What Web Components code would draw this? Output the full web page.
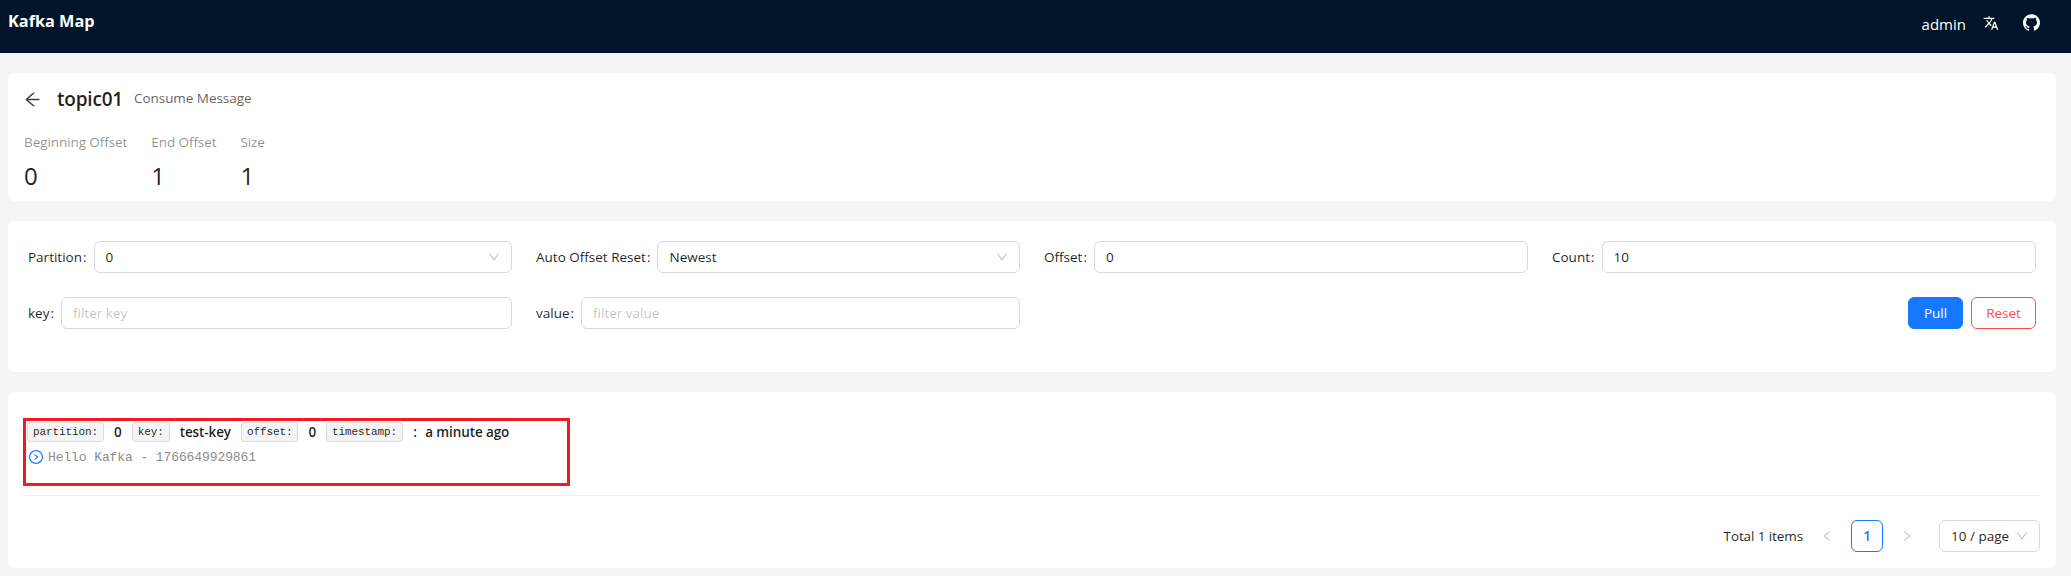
<!DOCTYPE html>
<html>

<head>
    <meta charset="utf-8">
    <title>Kafka Map</title>
    <style>
        html,
        body {
            margin: 0;
            background-color: #f5f5f5;
            font-family: "Open Sans", "Noto Sans", sans-serif;
            font-size: 13.5px;
            color: rgba(0, 0, 0, .88);
        }

        main {
            display: flex;
            flex-direction: column;
            gap: 20px;
            width: 2048px;
            padding: 20px 0 0 8px;
        }
    </style>
</head>

<body>
    <app-header></app-header>
    <main>
        <app-card style="height: 128px">
            <page-title name="topic01" sub="Consume Message"></page-title>
            <div style="display: flex; gap: 24px">
                <stat-item label="Beginning Offset" value="0"></stat-item>
                <stat-item label="End Offset" value="1"></stat-item>
                <stat-item label="Size" value="1"></stat-item>
            </div>
        </app-card>
        <app-card style="height: 151px" pad="20px 20px 0">
            <search-form></search-form>
        </app-card>
        <app-card style="height: 176px" pad="26px 16px 0">
            <message-row></message-row>
            <page-bar></page-bar>
        </app-card>
    </main>

    <script>
        const icons = {
            back: ['64 64 896 896', 'M872 474H286.9l350.2-304c5.6-4.9 2.2-14-5.2-14h-88.5c-3.9 0-7.6 1.4-10.5 3.9L155 487.8a31.96 31.96 0 0 0 0 48.3L535.1 866c1.5 1.3 3.3 2 5.2 2h91.5c7.4 0 10.8-9.2 5.2-14L286.9 550H872c4.4 0 8-3.6 8-8v-60c0-4.4-3.6-8-8-8z'],
            down: ['64 64 896 896', 'M884 256h-75c-5.1 0-9.9 2.5-12.9 6.6L512 654.2 227.9 262.6c-3-4.1-7.8-6.6-12.9-6.6h-75c-6.5 0-10.3 7.4-6.5 12.7l352.6 486.1c12.8 17.6 39 17.6 51.7 0l352.6-486.1c3.9-5.3.1-12.7-6.4-12.7z'],
            left: ['64 64 896 896', 'M724 218.3V141c0-6.7-7.7-10.4-12.9-6.3L260.3 486.8a31.86 31.86 0 0 0 0 50.3l450.8 352.1c5.3 4.1 12.9.4 12.9-6.3v-77.3c0-4.9-2.3-9.6-6.1-12.6l-360-281 360-281.1c3.8-3 6.1-7.7 6.1-12.6z'],
            right: ['64 64 896 896', 'M765.7 486.8L314.9 134.7A7.97 7.97 0 0 0 302 141v77.3c0 4.9 2.3 9.6 6.1 12.6l360 281.1-360 281.1c-3.9 3-6.1 7.7-6.1 12.6V883c0 6.7 7.7 10.4 12.9 6.3l450.8-352.1a31.96 31.96 0 0 0 0-50.4z'],
            github: ['64 64 896 896', 'M511.6 76.3C264.3 76.2 64 276.4 64 523.5 64 718.9 189.3 885 363.8 946c23.5 5.9 19.9-10.8 19.9-22.2v-77.5c-135.7 15.9-141.2-73.9-150.3-88.9C215 726 171.5 718 184.5 703c30.9-15.9 62.4 4 98.9 57.9 26.4 39.1 77.9 32.5 104 26 5.7-23.5 17.9-44.5 34.7-60.8-140.6-25.2-199.2-111-199.2-213 0-49.5 16.3-95 48.3-131.7-20.4-60.5 1.9-112.3 4.9-120 58.1-5.2 118.5 41.6 123.2 45.3 33-8.9 70.7-13.6 112.9-13.6 42.4 0 80.2 4.9 113.5 13.9 11.3-8.6 67.3-48.8 121.3-43.9 2.9 7.7 24.7 58.3 5.5 118 32.4 36.8 48.9 82.7 48.9 132.3 0 102.2-59 188.1-200 212.9a127.5 127.5 0 0 1 38.1 91v112.5c.8 9 0 17.9 15 17.9 177.1-59.7 304.6-227 304.6-424.1 0-247.2-200.4-447.3-447.5-447.3z'],
            translate: ['0 0 24 24', 'M12.87 15.07l-2.54-2.51.03-.03c1.74-1.94 2.98-4.17 3.71-6.53H17V4h-7V2H8v2H1v1.99h11.17C11.5 7.92 10.44 9.75 9 11.35 8.07 10.32 7.3 9.19 6.69 8h-2c.73 1.63 1.73 3.17 2.98 4.56l-5.09 5.02L4 19l5-5 3.11 3.11.76-2.04zM18.5 10h-2L12 22h2l1.12-3h4.75L21 22h2l-4.5-12zm-2.62 7l1.62-4.33L19.12 17h-3.24z'],
            play: ['64 64 896 896', 'M666.7 505.5l-246-178A8 8 0 0 0 408 334v46.9c0 10.2 4.9 19.9 13.2 25.9L566.6 512 421.2 617.2c-8.3 6-13.2 15.6-13.2 25.9V690c0 6.5 7.4 10.3 12.7 6.5l246-178c4.4-3.2 4.4-9.8 0-13z M512 64C264.6 64 64 264.6 64 512s200.6 448 448 448 448-200.6 448-448S759.4 64 512 64zm0 820c-205.4 0-372-166.6-372-372s166.6-372 372-372 372 166.6 372 372-166.6 372-372 372z']
        };

        function icon(name, size) {
            const [box, d] = icons[name];
            return `<svg width="${size}" height="${size}" viewBox="${box}" fill="currentColor" style="display:block;flex:none"><path d="${d}"/></svg>`;
        }

        class Base extends HTMLElement {
            constructor() {
                super();
                this.attachShadow({ mode: 'open' });
            }
            attr(name, fallback = '') {
                return this.getAttribute(name) ?? fallback;
            }
        }

        class AppHeader extends Base {
            connectedCallback() {
                this.shadowRoot.innerHTML = `
                <style>
                    :host { display: flex; align-items: center; height: 53px; padding: 0 31px 0 8px; background: #001529; color: #fff; }
                    .logo { font-size: 16.3px; font-weight: 700; flex: 1; margin-top: -11px; }
                    .user { font-size: 15px; margin-top: -6px; margin-right: 17px; }
                    .lang { margin-right: 24px; margin-top: -7px; }
                    .git { margin-top: -8px; }
                </style>
                <div class="logo">Kafka Map</div>
                <div class="user">admin</div>
                <div class="lang">${icon('translate', 16)}</div>
                <div class="git">${icon('github', 17)}</div>`;
            }
        }

        class AppCard extends Base {
            connectedCallback() {
                this.shadowRoot.innerHTML = `
                <style>
                    :host { display: block; box-sizing: border-box; background: #fff; border-radius: 6px; padding: ${this.attr('pad', '16px')}; }
                </style>
                <slot></slot>`;
            }
        }

        class PageTitle extends Base {
            connectedCallback() {
                this.shadowRoot.innerHTML = `
                <style>
                    :host { display: flex; align-items: center; height: 22px; margin: 0 0 20px; }
                    .back { margin: -2px 16px 0 0; color: rgba(0,0,0,.75); }
                    .name { font-size: 19px; font-weight: 600; letter-spacing: -.2px; color: rgba(0,0,0,.88); margin: -2px 11px 0 0; }
                    .sub { color: rgba(0,0,0,.65); margin-top: -4px; letter-spacing: -.05px; }
                </style>
                <span class="back">${icon('back', 17)}</span>
                <span class="name">${this.attr('name')}</span>
                <span class="sub">${this.attr('sub')}</span>`;
            }
        }

        class StatItem extends Base {
            connectedCallback() {
                this.shadowRoot.innerHTML = `
                <style>
                    :host { display: block; }
                    .label { color: rgba(0,0,0,.45); line-height: 22px; margin-bottom: 7px; letter-spacing: -.08px; }
                    .value { font-size: 24px; line-height: 32px; color: rgba(0,0,0,.88); }
                </style>
                <div class="label">${this.attr('label')}</div>
                <div class="value">${this.attr('value')}</div>`;
            }
        }

        class FormField extends Base {
            connectedCallback() {
                const value = this.attr('value');
                const hint = this.attr('hint');
                this.shadowRoot.innerHTML = `
                <style>
                    :host { display: flex; align-items: center; height: 32px; }
                    label { white-space: nowrap; margin-right: 7px; }
                    label i { font-style: normal; margin-left: 1px; }
                    .box { flex: 1; box-sizing: border-box; height: 32px; display: flex; align-items: center; justify-content: space-between; padding: 0 11px; border: 1px solid #d9d9d9; border-radius: 6px; background: #fff; }
                    .hint { color: rgba(0,0,0,.25); }
                    svg { color: rgba(0,0,0,.25); }
                </style>
                <label>${this.attr('label')}<i>:</i></label>
                <div class="box">
                    ${hint ? `<span class="hint">${hint}</span>` : `<span>${value}</span>`}
                    ${this.hasAttribute('select') ? icon('down', 12) : ''}
                </div>`;
            }
        }

        class AppButton extends Base {
            connectedCallback() {
                const danger = this.hasAttribute('danger');
                this.shadowRoot.innerHTML = `
                <style>
                    :host { display: flex; align-items: center; justify-content: center; box-sizing: border-box; height: 32px; width: ${danger ? '65px' : '55px'}; border-radius: 6px; border: 1px solid ${danger ? '#ff4d4f' : '#1677ff'}; color: ${danger ? '#ff4d4f' : '#fff'}; background: ${danger ? '#fff' : '#1677ff'}; }
                </style>
                <slot></slot>`;
            }
        }

        class SearchForm extends Base {
            connectedCallback() {
                this.shadowRoot.innerHTML = `
                <style>
                    :host { display: grid; grid-template-columns: repeat(4, 484px); column-gap: 24px; row-gap: 24px; }
                    .actions { grid-column: 4; display: flex; justify-content: flex-end; gap: 8px; }
                </style>
                <form-field label="Partition" value="0" select></form-field>
                <form-field label="Auto Offset Reset" value="Newest" select></form-field>
                <form-field label="Offset" value="0"></form-field>
                <form-field label="Count" value="10"></form-field>
                <form-field label="key" hint="filter key"></form-field>
                <form-field label="value" hint="filter value"></form-field>
                <div class="actions">
                    <app-button>Pull</app-button>
                    <app-button danger>Reset</app-button>
                </div>`;
            }
        }

        class KeyTag extends Base {
            connectedCallback() {
                this.shadowRoot.innerHTML = `
                <style>
                    :host { display: block; box-sizing: border-box; height: 20px; line-height: 18px; padding: 0 5px; background: #f5f5f5; border: 1px solid #dcdcdc; border-radius: 3px; font-family: "Liberation Mono", monospace; font-size: 11px; font-weight: 400; letter-spacing: -.1px; color: rgba(0,0,0,.88); }
                </style>
                <slot></slot>`;
            }
        }

        class MessageRow extends Base {
            connectedCallback() {
                this.shadowRoot.innerHTML = `
                <style>
                    :host { display: block; box-sizing: border-box; width: 547px; height: 68px; margin-left: -1px; border: 3px solid #ed1c24; padding: 1px 1px; }
                    .meta { display: flex; align-items: center; height: 20px; font-weight: 600; letter-spacing: -.1px; }
                    .meta span { padding: 0 10px; }
                    .meta span.last { padding: 0 0 0 10px; }
                    .meta span.last b { font-weight: 600; margin-right: 5px; }
                    .body { display: flex; align-items: center; gap: 5px; margin: 5px 0 0 2px; height: 20px; font-family: "Liberation Mono", monospace; font-size: 13px; letter-spacing: -.1px; color: #8c8c8c; }
                    .body svg { color: #1677ff; }
                </style>
                <div class="meta">
                    <key-tag>partition:</key-tag><span>0</span>
                    <key-tag>key:</key-tag><span>test-key</span>
                    <key-tag>offset:</key-tag><span>0</span>
                    <key-tag>timestamp:</key-tag><span class="last"><b>:</b> a minute ago</span>
                </div>
                <div class="body">${icon('play', 14)}<span>Hello Kafka - 1766649929861</span></div>`;
            }
        }

        class PageBar extends Base {
            connectedCallback() {
                this.shadowRoot.innerHTML = `
                <style>
                    :host { display: flex; align-items: center; justify-content: flex-end; height: 32px; margin-top: 9px; padding-top: 24px; border-top: 1px solid #f0f0f0; }
                    .total { margin-right: 8px; letter-spacing: -.1px; }
                    .arrow { width: 32px; height: 32px; display: flex; align-items: center; justify-content: center; color: rgba(0,0,0,.25); }
                    .page { box-sizing: border-box; width: 32px; height: 32px; margin: 0 8px; display: flex; align-items: center; justify-content: center; border: 1px solid #1677ff; border-radius: 6px; color: #1677ff; font-weight: 600; }
                    .size { box-sizing: border-box; width: 101px; height: 32px; margin-left: 16px; padding: 0 11px; display: flex; align-items: center; justify-content: space-between; border: 1px solid #d9d9d9; border-radius: 6px; }
                    .size svg { color: rgba(0,0,0,.25); }
                </style>
                <span class="total">Total 1 items</span>
                <span class="arrow">${icon('left', 12)}</span>
                <span class="page">1</span>
                <span class="arrow">${icon('right', 12)}</span>
                <span class="size"><span>10 / page</span>${icon('down', 12)}</span>`;
            }
        }

        customElements.define('app-header', AppHeader);
        customElements.define('app-card', AppCard);
        customElements.define('page-title', PageTitle);
        customElements.define('stat-item', StatItem);
        customElements.define('form-field', FormField);
        customElements.define('app-button', AppButton);
        customElements.define('search-form', SearchForm);
        customElements.define('key-tag', KeyTag);
        customElements.define('message-row', MessageRow);
        customElements.define('page-bar', PageBar);
    </script>
</body>

</html>
